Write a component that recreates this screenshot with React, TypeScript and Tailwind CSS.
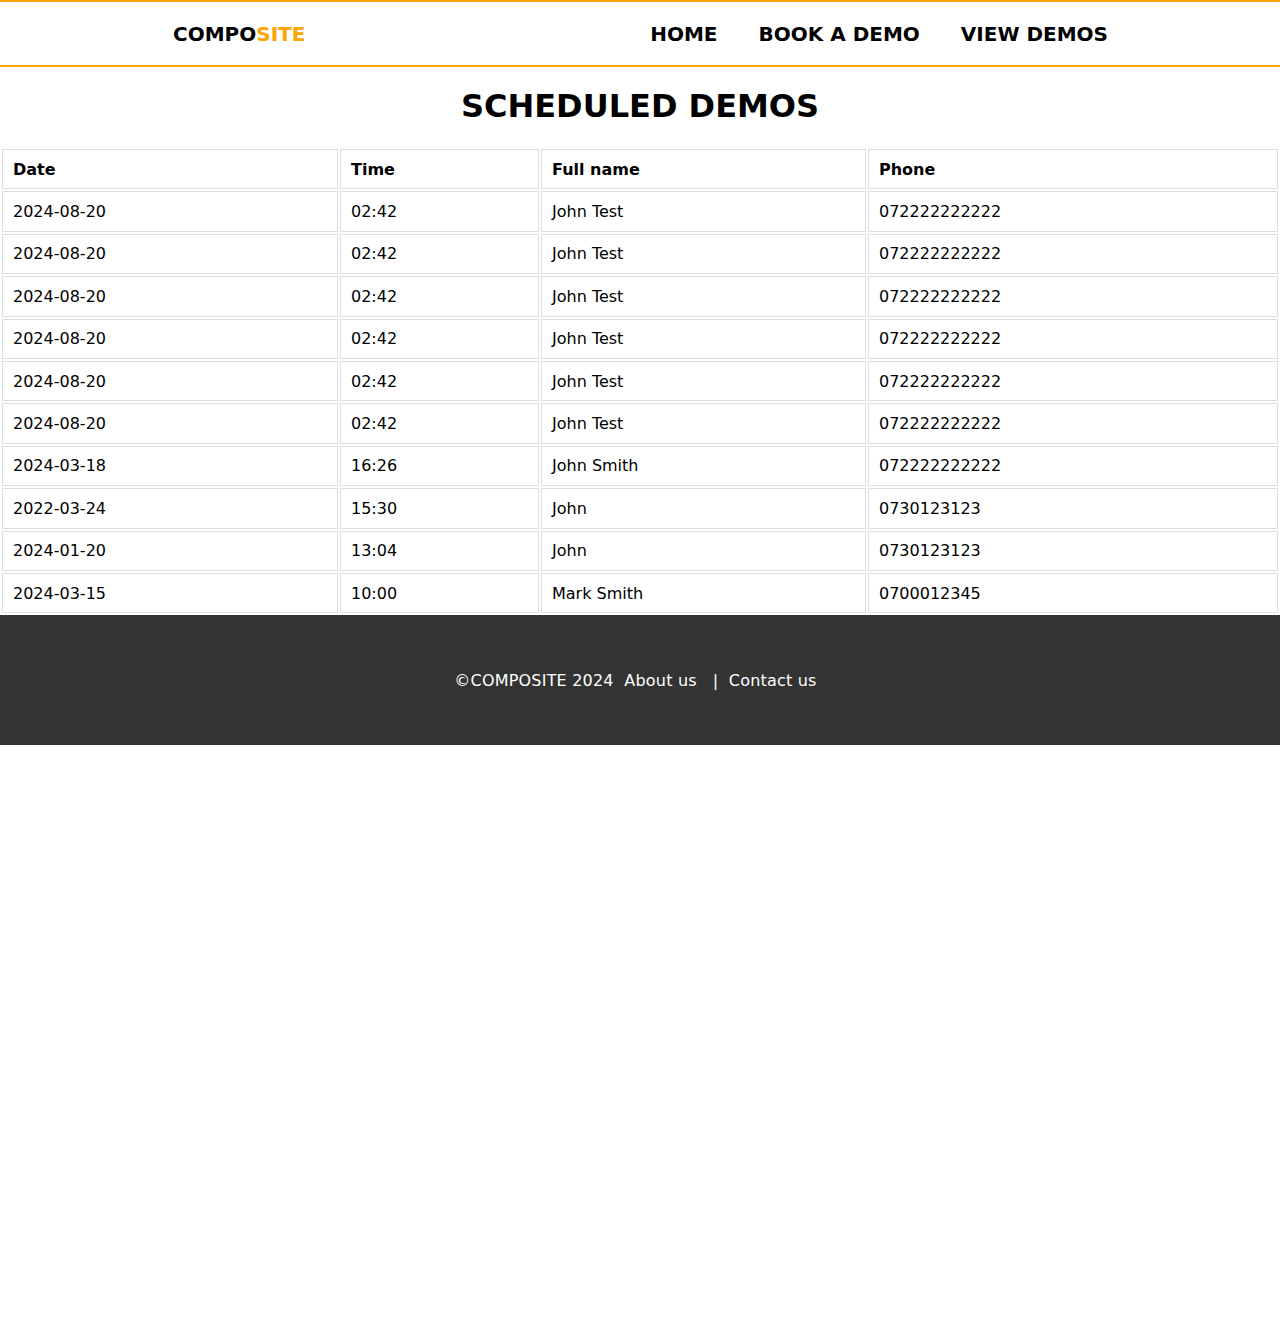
import React from "react";

const rows = [
  ["2024-08-20", "02:42", "John Test", "072222222222"],
  ["2024-08-20", "02:42", "John Test", "072222222222"],
  ["2024-08-20", "02:42", "John Test", "072222222222"],
  ["2024-08-20", "02:42", "John Test", "072222222222"],
  ["2024-08-20", "02:42", "John Test", "072222222222"],
  ["2024-08-20", "02:42", "John Test", "072222222222"],
  ["2024-03-18", "16:26", "John Smith", "072222222222"],
  ["2022-03-24", "15:30", "John", "0730123123"],
  ["2024-01-20", "13:04", "John", "0730123123"],
  ["2024-03-15", "10:00", "Mark Smith", "0700012345"],
];

export default function App() {
  return (
    <div className="bg-white text-black text-[16px]" style={{ fontFamily: '"DejaVu Sans", Verdana, sans-serif' }}>
      <header className="border-y-2 border-[#ffa500] h-[67px] flex items-center justify-between pl-[173px] pr-[172px]">
        <div className="text-[20px] font-bold leading-none">
          COMPO<span className="text-[#ffa500]">SITE</span>
        </div>
        <nav className="flex gap-[41px] text-[20px] font-bold leading-none">
          <span>HOME</span>
          <span>BOOK A DEMO</span>
          <span>VIEW DEMOS</span>
        </nav>
      </header>
      <h1 className="text-[32px] font-bold text-center mt-[21px] mb-[22px] leading-[37px]">SCHEDULED DEMOS</h1>
      <table className="w-full border-separate border-spacing-[2px] table-fixed">
        <colgroup>
          <col className="w-[336px]" />
          <col className="w-[199px]" />
          <col className="w-[325px]" />
          <col />
        </colgroup>
        <thead>
          <tr>
            {["Date", "Time", "Full name", "Phone"].map((h) => (
              <th key={h} className="border border-[#ddd] pl-[10px] pr-[10px] pt-[10.5px] pb-[9.5px] text-left font-bold leading-[18.4px]">
                {h}
              </th>
            ))}
          </tr>
        </thead>
        <tbody>
          {rows.map((r, i) => (
            <tr key={i}>
              {r.map((c, j) => (
                <td key={j} className="border border-[#ddd] pl-[10px] pr-[10px] pt-[10.5px] pb-[9.5px] leading-[18.4px]">
                  {c}
                </td>
              ))}
            </tr>
          ))}
        </tbody>
      </table>
      <footer className="bg-[#333333] text-white text-center pt-[40px] pb-[39px]">
        <p className="my-[16px] pr-[9px] leading-[19px] tracking-[0.2px]">
          ©COMPOSITE 2024{"\u00a0\u00a0"}About us{"\u00a0\u00a0\u00a0"}|{"\u00a0\u00a0"}Contact us
        </p>
      </footer>
    </div>
  );
}
